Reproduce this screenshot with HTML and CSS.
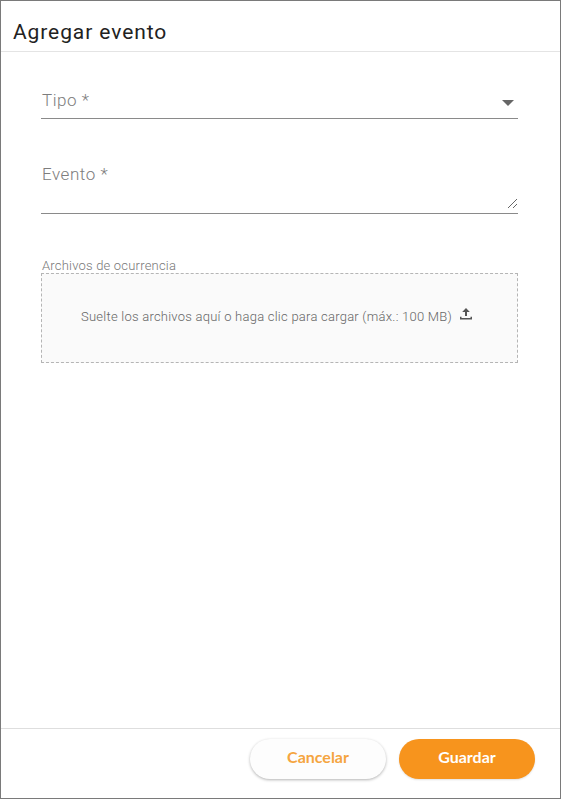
FILE: index.html
```html
<!DOCTYPE html>
<html lang="es">
<head>
<meta charset="utf-8">
<title>Agregar evento</title>
<link rel="stylesheet" href="styles.css">
</head>
<body>
<div class="dialog">
  <header class="dialog-header"><h1 class="dialog-title">Agregar evento</h1></header>
  <main class="dialog-body">
    <div class="field field-select">
      <span class="field-label">Tipo *</span>
      <span class="select-arrow"></span>
    </div>
    <div class="field field-textarea">
      <span class="field-label">Evento *</span>
      <svg class="resize-grip" width="11" height="11" viewBox="0 0 11 11"><path d="M1 10 10 1M6 10 10 6" fill="none" stroke="#666" stroke-width="1"/></svg>
    </div>
    <div class="upload">
      <div class="upload-label">Archivos de ocurrencia</div>
      <div class="dropzone">
        <span class="drop-text">Suelte los archivos aquí o haga clic para cargar (máx.: 100 MB)</span>
        <svg class="upload-icon" width="16" height="16" viewBox="0 0 16 16"><path d="M8 2 4.200 6H7v4h2V6h2.800zM2 10.700V13.500h12v-2.800h-1.500v1.400H3.500v-1.400z" fill="#555"/></svg>
      </div>
    </div>
  </main>
  <footer class="dialog-footer">
    <button class="btn btn-cancel">Cancelar</button>
    <button class="btn btn-save">Guardar</button>
  </footer>
</div>
</body>
</html>
```

FILE: styles.css
```css
html, body { margin: 0; padding: 0; background: #fff; }
body { width: 562px; height: 800px; overflow: hidden; font-family: Roboto, sans-serif; }
.dialog {
  box-sizing: border-box;
  width: 561px;
  height: 799px;
  border: 1px solid #7a7a7a;
  display: flex;
  flex-direction: column;
  background: #fff;
}
.dialog-header {
  height: 51px;
  box-sizing: border-box;
  border-bottom: 1px solid #e4e4e4;
  padding: 18px 12px 0;
}
.dialog-title {
  margin: 0;
  font-size: 21px;
  line-height: 26px;
  font-weight: 400;
  letter-spacing: 0.9px;
  color: #222;
}
.dialog-body {
  flex: 1;
  padding: 0 42px 0 40px;
}
.field {
  position: relative;
  display: flex;
  box-sizing: border-box;
  border-bottom: 1px solid #8a8a8a;
}
.field-label {
  margin-left: 1px;
  font-size: 17px;
  line-height: 20px;
  font-weight: 300;
  color: #7d7d7d;
  letter-spacing: 0.55px;
}
.field-select { height: 67px; padding-top: 38px; justify-content: space-between; }
.select-arrow {
  margin: 10px 4px 0 0;
  width: 0;
  height: 0;
  border-left: 6px solid transparent;
  border-right: 6px solid transparent;
  border-top: 6px solid #666;
}
.field-textarea { height: 95px; padding-top: 45px; }
.resize-grip { position: absolute; right: 0; bottom: 4px; }
.upload { margin-top: 43px; }
.upload-label {
  margin-left: 1px;
  font-size: 13px;
  line-height: 15px;
  padding-top: 1px;
  color: #777;
  font-weight: 300;
  letter-spacing: 0.2px;
}
.dropzone {
  box-sizing: border-box;
  height: 90px;
  border: 1px dashed #b5b5b5;
  background: #fafafa;
  display: flex;
  justify-content: center;
  gap: 6px;
  padding: 33px 4px 0 0;
}
.drop-text {
  font-size: 13px;
  line-height: 20px;
  font-weight: 300;
  letter-spacing: 0.24px;
  color: #666;
}
.upload-icon { margin-top: -1px; }
.dialog-footer {
  height: 70px;
  box-sizing: border-box;
  border-top: 1px solid #dedede;
  display: flex;
  justify-content: flex-end;
  gap: 13px;
  padding: 10px 25px 0 0;
}
.btn {
  width: 136px;
  height: 40px;
  border: 0;
  border-radius: 20px;
  padding: 0 0 5px 0;
  font-family: Lato, sans-serif;
  font-size: 16px;
  font-weight: 700;
}
.btn-cancel {
  background: #fdfdfd;
  color: #f5a540;
  box-shadow: 0 1px 3px rgba(0, 0, 0, 0.3);
}
.btn-save {
  background: #f7941d;
  color: #fff;
  box-shadow: 0 1px 2px rgba(0, 0, 0, 0.12);
}
```
